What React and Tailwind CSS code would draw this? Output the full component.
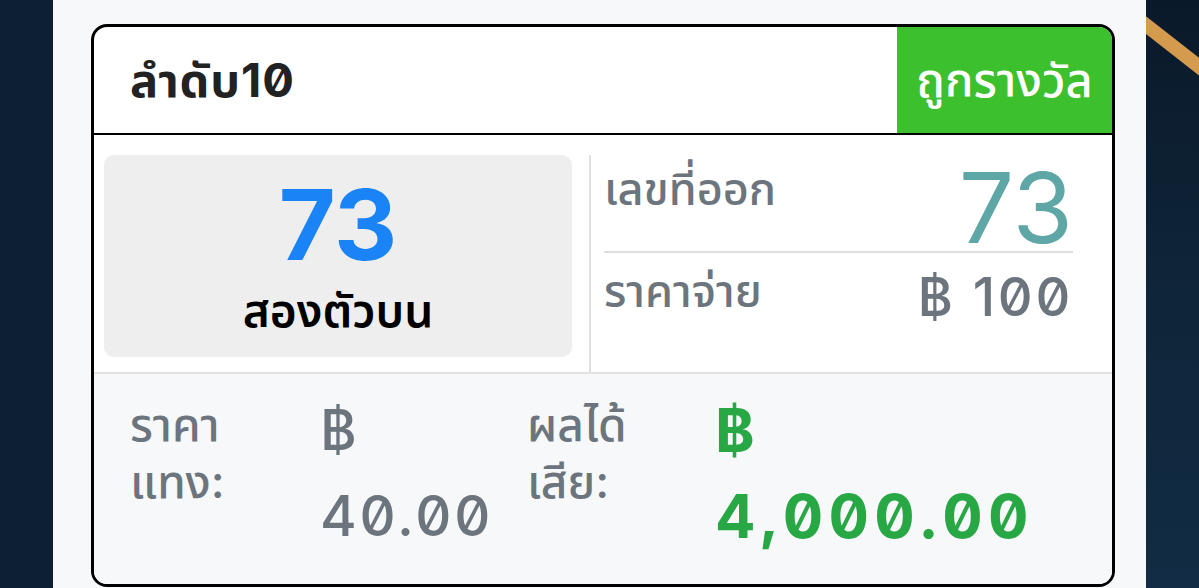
import React from "react";

const thai = { fontFamily: 'Inter, "Noto Sans Thai", "Noto Sans", "DejaVu Sans", sans-serif' };

export default function App() {
  return (
    <div className="w-[1199px] h-[588px] flex overflow-hidden bg-[#0d2035]" style={thai}>
      {/* left dark strip */}
      <div className="w-[53px] shrink-0 bg-[#0c1f33]" />

      {/* page panel */}
      <div className="w-[1093px] shrink-0 bg-[#f7f8fa] pt-[24px] pl-[38px]">
        <div className="w-[1024px] h-[563px] border-[3px] border-black rounded-[16px] overflow-hidden bg-white flex flex-col slashed-zero">
          {/* header */}
          <div className="h-[108px] shrink-0 flex border-b-2 border-black">
            <div className="flex-1 flex items-center pl-[36px] text-[47px] font-bold text-[#222] tracking-[0.02em]">
              ลำดับ10
            </div>
            <div className="w-[215px] bg-[#3dc02d] flex items-center justify-center text-[47px] font-medium text-white">
              ถูกรางวัล
            </div>
          </div>

          {/* result row */}
          <div className="h-[237px] shrink-0 flex">
            <div className="w-[495px] shrink-0 pl-[10px] pr-[17px] pt-[20px] pb-[15px]">
              <div className="h-full rounded-[10px] bg-[#eeeeee] flex flex-col items-center justify-center">
                <div className="text-[98px] leading-none font-bold text-[#1a84f6] mt-[4px]">73</div>
                <div className="text-[46px] leading-[60px] font-semibold text-black mt-[6px]">สองตัวบน</div>
              </div>
            </div>
            <div className="w-[2px] shrink-0 bg-[#e0e0e0] mt-[20px]" />
            <div className="flex-1 pl-[13px] pr-[39px] pt-[14px] flex flex-col">
              <div className="flex justify-between items-end h-[104px] border-b-2 border-[#dedede]">
                <div className="self-start text-[45px] leading-[60px] text-[#6c757d] font-medium mt-[10px]">เลขที่ออก</div>
                <div className="text-[98px] leading-[86px] text-[#5fa7a7] font-normal">73</div>
              </div>
              <div className="flex justify-between items-start">
                <div className="text-[45px] leading-[60px] text-[#6c757d] font-medium mt-[8px]">ราคาจ่าย</div>
                <div className="text-[54px] leading-[60px] text-[#6c757d] font-medium mt-[14px] tracking-[0.05em]">฿ 100</div>
              </div>
            </div>
          </div>

          {/* stake row */}
          <div className="flex-1 bg-[#f7f8fa] border-t-2 border-[#e3e3e3] flex">
            <div className="w-[226px] shrink-0 pl-[36px] pt-[22px] text-[46px] leading-[57px] text-[#6c757d] font-medium">
              <div>ราคา</div>
              <div>แทง:</div>
            </div>
            <div className="w-[207px] shrink-0 pt-[13px] text-[56px] leading-[86px] text-[#6c757d] font-medium tracking-[0.05em]">
              <div>฿</div>
              <div>40.00</div>
            </div>
            <div className="w-[188px] shrink-0 pt-[22px] text-[46px] leading-[57px] text-[#6c757d] font-medium">
              <div>ผลได้</div>
              <div>เสีย:</div>
            </div>
            <div className="flex-1 pt-[13px] text-[60px] leading-[86px] text-[#28a745] font-bold tracking-[0.09em]">
              <div>฿</div>
              <div>4,000.00</div>
            </div>
          </div>
        </div>
      </div>

      {/* right dark strip with gold line */}
      <div className="flex-1 relative bg-linear-to-b from-[#0a192a] via-[#0f2539] to-[#112c44]">
        <svg className="absolute inset-0" width="53" height="588" viewBox="0 0 53 588">
          <line x1="-4" y1="22" x2="60" y2="72" stroke="#d49a4d" strokeWidth="14" />
        </svg>
      </div>
    </div>
  );
}
